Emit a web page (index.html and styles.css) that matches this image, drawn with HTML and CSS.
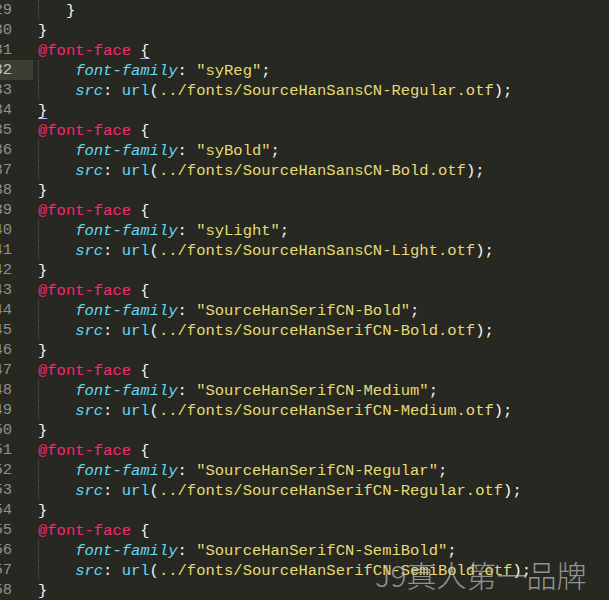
FILE: index.html
```html
<!DOCTYPE html>
<html>
<head>
<meta charset="utf-8">
<link rel="stylesheet" href="styles.css">
</head>
<body>
<div class="editor">
  <div class="line"><span class="gutter"><span>29</span></span><span class="code"><span class="ind ind3"></span><span class="p">}</span></span></div>
  <div class="line"><span class="gutter"><span>30</span></span><span class="code"><span class="p">}</span></span></div>
  <div class="line"><span class="gutter"><span>31</span></span><span class="code"><span class="at">@font-face</span> <span class="p match">{</span></span></div>
  <div class="line current"><span class="gutter"><span>32</span></span><span class="code"><span class="ind"></span><span class="prop">font-family</span><span class="p">: </span><span class="str">"syReg"</span><span class="p">;</span></span></div>
  <div class="line"><span class="gutter"><span>33</span></span><span class="code"><span class="ind"></span><span class="prop">src</span><span class="p">: </span><span class="fn">url</span><span class="p">(</span><span class="str">../fonts/SourceHanSansCN-Regular.otf</span><span class="p">);</span></span></div>
  <div class="line"><span class="gutter"><span>34</span></span><span class="code"><span class="p match">}</span></span></div>
  <div class="line"><span class="gutter"><span>35</span></span><span class="code"><span class="at">@font-face</span> <span class="p">{</span></span></div>
  <div class="line"><span class="gutter"><span>36</span></span><span class="code"><span class="ind"></span><span class="prop">font-family</span><span class="p">: </span><span class="str">"syBold"</span><span class="p">;</span></span></div>
  <div class="line"><span class="gutter"><span>37</span></span><span class="code"><span class="ind"></span><span class="prop">src</span><span class="p">: </span><span class="fn">url</span><span class="p">(</span><span class="str">../fonts/SourceHanSansCN-Bold.otf</span><span class="p">);</span></span></div>
  <div class="line"><span class="gutter"><span>38</span></span><span class="code"><span class="p">}</span></span></div>
  <div class="line"><span class="gutter"><span>39</span></span><span class="code"><span class="at">@font-face</span> <span class="p">{</span></span></div>
  <div class="line"><span class="gutter"><span>40</span></span><span class="code"><span class="ind"></span><span class="prop">font-family</span><span class="p">: </span><span class="str">"syLight"</span><span class="p">;</span></span></div>
  <div class="line"><span class="gutter"><span>41</span></span><span class="code"><span class="ind"></span><span class="prop">src</span><span class="p">: </span><span class="fn">url</span><span class="p">(</span><span class="str">../fonts/SourceHanSansCN-Light.otf</span><span class="p">);</span></span></div>
  <div class="line"><span class="gutter"><span>42</span></span><span class="code"><span class="p">}</span></span></div>
  <div class="line"><span class="gutter"><span>43</span></span><span class="code"><span class="at">@font-face</span> <span class="p">{</span></span></div>
  <div class="line"><span class="gutter"><span>44</span></span><span class="code"><span class="ind"></span><span class="prop">font-family</span><span class="p">: </span><span class="str">"SourceHanSerifCN-Bold"</span><span class="p">;</span></span></div>
  <div class="line"><span class="gutter"><span>45</span></span><span class="code"><span class="ind"></span><span class="prop">src</span><span class="p">: </span><span class="fn">url</span><span class="p">(</span><span class="str">../fonts/SourceHanSerifCN-Bold.otf</span><span class="p">);</span></span></div>
  <div class="line"><span class="gutter"><span>46</span></span><span class="code"><span class="p">}</span></span></div>
  <div class="line"><span class="gutter"><span>47</span></span><span class="code"><span class="at">@font-face</span> <span class="p">{</span></span></div>
  <div class="line"><span class="gutter"><span>48</span></span><span class="code"><span class="ind"></span><span class="prop">font-family</span><span class="p">: </span><span class="str">"SourceHanSerifCN-Medium"</span><span class="p">;</span></span></div>
  <div class="line"><span class="gutter"><span>49</span></span><span class="code"><span class="ind"></span><span class="prop">src</span><span class="p">: </span><span class="fn">url</span><span class="p">(</span><span class="str">../fonts/SourceHanSerifCN-Medium.otf</span><span class="p">);</span></span></div>
  <div class="line"><span class="gutter"><span>50</span></span><span class="code"><span class="p">}</span></span></div>
  <div class="line"><span class="gutter"><span>51</span></span><span class="code"><span class="at">@font-face</span> <span class="p">{</span></span></div>
  <div class="line"><span class="gutter"><span>52</span></span><span class="code"><span class="ind"></span><span class="prop">font-family</span><span class="p">: </span><span class="str">"SourceHanSerifCN-Regular"</span><span class="p">;</span></span></div>
  <div class="line"><span class="gutter"><span>53</span></span><span class="code"><span class="ind"></span><span class="prop">src</span><span class="p">: </span><span class="fn">url</span><span class="p">(</span><span class="str">../fonts/SourceHanSerifCN-Regular.otf</span><span class="p">);</span></span></div>
  <div class="line"><span class="gutter"><span>54</span></span><span class="code"><span class="p">}</span></span></div>
  <div class="line"><span class="gutter"><span>55</span></span><span class="code"><span class="at">@font-face</span> <span class="p">{</span></span></div>
  <div class="line"><span class="gutter"><span>56</span></span><span class="code"><span class="ind"></span><span class="prop">font-family</span><span class="p">: </span><span class="str">"SourceHanSerifCN-SemiBold"</span><span class="p">;</span></span></div>
  <div class="line"><span class="gutter"><span>57</span></span><span class="code"><span class="ind"></span><span class="prop">src</span><span class="p">: </span><span class="fn">url</span><span class="p">(</span><span class="str">../fonts/SourceHanSerifCN-SemiBold.otf</span><span class="p">);</span></span></div>
  <div class="line"><span class="gutter"><span>58</span></span><span class="code"><span class="p">}</span></span></div>
  <div class="watermark">J9真人第一品牌</div>
</div>
</body>
</html>
```
FILE: styles.css
```css
html, body {
  margin: 0;
  padding: 0;
  background: #272822;
  overflow: hidden;
}
.editor {
  position: relative;
  width: 609px;
  height: 600px;
  background: #272822;
  font-family: "Liberation Mono", "DejaVu Sans Mono", monospace;
  font-size: 15.5px;
  color: #f8f8f2;
}
.line {
  display: flex;
  height: 20px;
  line-height: 20px;
  white-space: pre;
}
.gutter {
  flex: 0 0 33px;
  box-sizing: border-box;
  display: flex;
  justify-content: flex-end;
  padding-right: 21px;
  overflow: hidden;
  color: #8f908a;
}
.current .gutter {
  background: #3e3d32;
  color: #c8c8c2;
}
.code {
  display: block;
  padding-left: 5px;
  padding-top: 1px;
}
.ind {
  display: inline-block;
  box-sizing: border-box;
  width: 37.2px;
  height: 20px;
  margin-top: -1px;
  vertical-align: top;
  border-left: 1px dotted #55564d;
}
.ind3 {
  width: 27.9px;
}
.p { color: #f8f8f2; }
.at { color: #f92672; }
.prop { color: #66d9ef; font-style: italic; }
.fn { color: #66d9ef; }
.str { color: #e6db74; }
.match {
  text-decoration: underline;
  text-decoration-color: #b9b2e6;
  text-underline-offset: 3px;
}
.watermark {
  position: absolute;
  left: 375px;
  top: 556px;
  font-family: "Noto Sans CJK SC", sans-serif;
  font-weight: 300;
  font-size: 30px;
  line-height: 36px;
  color: rgba(190, 190, 190, 0.72);
  white-space: nowrap;
}
```
